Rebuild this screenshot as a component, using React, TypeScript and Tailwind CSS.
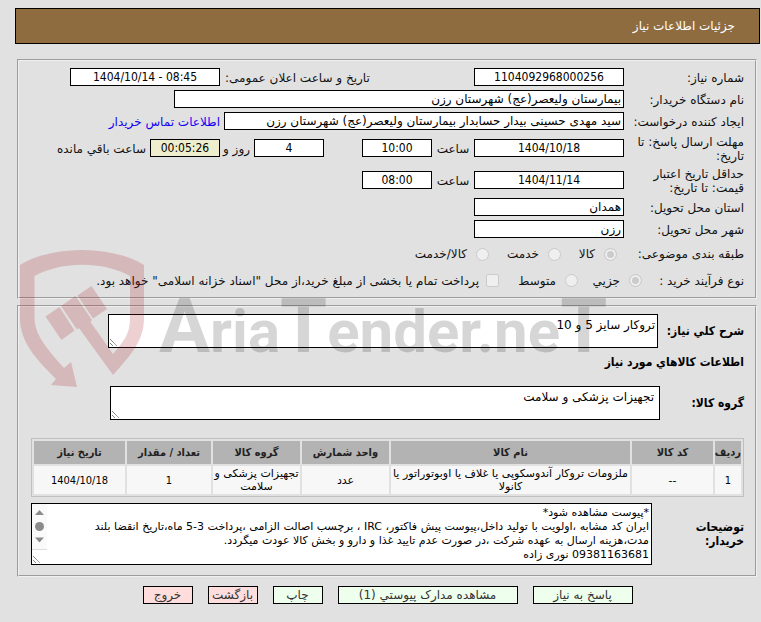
import React from "react";

const BOX =
  "block h-[18px] border border-black bg-white px-[2px] text-[12px] leading-4 text-black outline-none";
const NUMERIC =
  BOX + " text-center font-['DejaVu_Sans_Condensed','DejaVu_Sans',sans-serif]";
const ROW = "flex min-h-[22px] items-center";
const LABEL = "w-[120px] shrink-0 pl-2 pt-px leading-[14px]";
const CHOICE =
  "relative size-[13px] shrink-0 appearance-none border border-[#cbcbcb] bg-[#efefef]";
const RADIO =
  CHOICE +
  " rounded-full checked:bg-[#cbcbcb] checked:shadow-[inset_0_0_0_2px_#efefef]";
const BOLD =
  "font-['DejaVu_Sans_Condensed','DejaVu_Sans',sans-serif] text-[12px] font-bold text-black";

function Grip() {
  return (
    <svg className="block" width="9" height="9" viewBox="0 0 9 9" aria-hidden="true">
      <path d="M1 1L8 8M1 5L4 8" stroke="#555" strokeWidth="1" strokeDasharray="1 0.6" fill="none" />
    </svg>
  );
}

function Area({ id, value, wide }: { id: string; value: string; wide?: boolean }) {
  return (
    <div className="flex h-[34px] w-[550px] border border-black bg-white">
      <textarea
        id={id}
        readOnly
        className={
          "block min-w-0 flex-1 resize-none overflow-hidden bg-transparent py-[3px] text-[12px] leading-[14px] text-black outline-none " +
          (wide ? "px-[5px]" : "px-[2px]")
        }
        defaultValue={value}
      />
      <div className="self-end">
        <Grip />
      </div>
    </div>
  );
}

function Watermark() {
  return (
    <svg
      className="pointer-events-none absolute left-[17px] top-[247px]"
      width="600"
      height="145"
      viewBox="17 247 600 145"
      aria-hidden="true"
    >
      <g fill="#a5141e" fillOpacity="0.2">
        <path d="M20 265C52 245 112 245 144 265V318C144 340 132 354 113 375L79 328L77 329.500L61 306L75.500 296L92 320L90.500 322L113 354C125 340 130 333 130 318V276C103 261 62 261 34.500 276V318C34.500 334 46 348 64 368L71 362L77 387L51 385L56 379C36 359 20 342 20 318Z" />
        <path d="M45.500 316.500L59.500 307L74.500 330.500L61.500 340Z" />
        <path d="M77.500 295.500L91.500 286L107 309L93 318.500Z" />
      </g>
      <text
        x="159"
        y="352"
        fontSize="60"
        fontWeight="700"
        fill="#000"
        fillOpacity="0.16"
        fontFamily="Roboto, 'Liberation Sans', sans-serif"
        direction="ltr"
      >
        <tspan fontSize="76">A</tspan>ria<tspan fontSize="76">T</tspan>ender.ne<tspan fontSize="76">T</tspan>
      </text>
    </svg>
  );
}

const COLUMNS = [
  ["ردیف", "1", "w-[26px]"],
  ["کد کالا", "--", "w-[81px]"],
  ["نام کالا", "ملزومات تروکار آندوسکوپی یا غلاف یا اوبوتوراتور یا کانولا", ""],
  ["واحد شمارش", "عدد", "w-[87px]"],
  ["گروه کالا", "تجهیزات پزشکی و سلامت", "w-[87px]"],
  ["تعداد / مقدار", "1", "w-[84px]"],
  ["تاریخ نیاز", "1404/10/18", "w-[91px]"],
];

const NOTES =
  "*پیوست مشاهده شود*\nایران کد مشابه ،اولویت با تولید داخل،پیوست پیش فاکتور، IRC ، برچسب اصالت الزامی ،پرداخت 3-5 ماه،تاریخ انقضا بلند مدت،هزینه ارسال به عهده شرکت ،در صورت عدم تایید غذا و دارو و بخش کالا عودت میگردد.\n09381163681 نوری زاده";

const PANEL = "min-w-0 border-2 border-[#f0f0f0] [border-style:groove] pl-3 pr-[11px]";
const BUTTON = "h-[18px] border border-black text-[12px] leading-4 text-[#333]";

export default function App() {
  return (
    <div
      dir="rtl"
      className="relative min-h-screen bg-[#e1e1e1] pb-4 pl-[15px] pr-px pt-2 font-['DejaVu_Sans',sans-serif] text-[12px] text-[#111]"
    >
      <header className="flex h-9 items-center border border-black bg-[#8f6c40] px-6 text-white">
        <h1>جزئیات اطلاعات نیاز</h1>
      </header>

      <main className="ml-[2px] mr-[3px] mt-[15px]">
        <fieldset className={PANEL + " pb-1 pt-[5px]"}>
          <div className={ROW}>
            <label htmlFor="number" className={LABEL}>شماره نیاز:</label>
            <input id="number" readOnly defaultValue="1104092968000256" className={NUMERIC + " w-[150px]"} />
            <label htmlFor="announce" className="w-[254px] pl-[5px] pt-px text-left">تاریخ و ساعت اعلان عمومی:</label>
            <input id="announce" dir="ltr" readOnly defaultValue="1404/10/14 - 08:45" className={NUMERIC + " w-[150px]"} />
          </div>
          <div className={ROW}>
            <label htmlFor="org" className={LABEL}>نام دستگاه خریدار:</label>
            <input id="org" readOnly defaultValue="بیمارستان ولیعصر(عج) شهرستان رزن" className={BOX + " w-[450px]"} />
          </div>
          <div className={ROW}>
            <label htmlFor="creator" className={LABEL + " whitespace-nowrap"}>ایجاد کننده درخواست:</label>
            <input id="creator" readOnly defaultValue="سید مهدی حسینی بیدار حسابدار بیمارستان ولیعصر(عج) شهرستان رزن" className={BOX + " w-[400px]"} />
            <a href="#contact" className="pr-1 pt-px text-[#1400f5]">اطلاعات تماس خریدار</a>
          </div>
          <div className={ROW + " h-8"}>
            <label htmlFor="deadline" className={LABEL}>مهلت ارسال پاسخ: تا تاریخ:</label>
            <input id="deadline" readOnly defaultValue="1404/10/18" className={NUMERIC + " w-[150px]"} />
            <label htmlFor="deadline-hour" className="w-[42px] pt-px text-center">ساعت</label>
            <input id="deadline-hour" readOnly defaultValue="10:00" className={NUMERIC + " ml-[38px] w-[70px]"} />
            <input id="days" readOnly defaultValue="4" className={NUMERIC + " w-[70px]"} />
            <label htmlFor="days" className="w-[34px] pr-1 pt-px">روز و</label>
            <input id="remaining" readOnly defaultValue="00:05:26" className={NUMERIC + " w-[70px] !bg-[#eeeecc]"} />
            <label htmlFor="remaining" className="whitespace-nowrap pr-1 pt-px">ساعت باقي مانده</label>
          </div>
          <div className={ROW + " h-8"}>
            <label htmlFor="validity" className={LABEL}>حداقل تاریخ اعتبار قیمت: تا تاریخ:</label>
            <input id="validity" readOnly defaultValue="1404/11/14" className={NUMERIC + " w-[150px]"} />
            <label htmlFor="validity-hour" className="w-[42px] pt-px text-center">ساعت</label>
            <input id="validity-hour" readOnly defaultValue="08:00" className={NUMERIC + " w-[70px]"} />
          </div>
          <div className={ROW}>
            <label htmlFor="province" className={LABEL}>استان محل تحویل:</label>
            <input id="province" readOnly defaultValue="همدان" className={BOX + " w-[150px]"} />
          </div>
          <div className={ROW}>
            <label htmlFor="city" className={LABEL}>شهر محل تحویل:</label>
            <input id="city" readOnly defaultValue="رزن" className={BOX + " w-[150px]"} />
          </div>
          <div role="radiogroup" aria-label="طبقه بندی موضوعی" className="flex h-7 items-center">
            <span className="w-[127px]">طبقه بندی موضوعی:</span>
            <label className="flex w-[56px] items-center gap-[9px]"><input type="radio" name="subject" defaultChecked className={RADIO} />کالا</label>
            <label className="flex w-[72px] items-center gap-[9px]"><input type="radio" name="subject" className={RADIO} />خدمت</label>
            <label className="flex items-center gap-[9px]"><input type="radio" name="subject" className={RADIO} />کالا/خدمت</label>
          </div>
          <div className="flex h-[25px] items-center">
            <span className="w-[102px]">نوع فرآیند خرید :</span>
            <label className="flex w-[64px] items-center gap-[9px]"><input type="radio" name="process" defaultChecked className={RADIO} />جزیي</label>
            <label className="flex w-[79px] items-center gap-[9px]"><input type="radio" name="process" className={RADIO} />متوسط</label>
            <label className="flex items-center gap-[7px] whitespace-nowrap"><input type="checkbox" className={CHOICE + " rounded-[2px]"} />پرداخت تمام یا بخشی از مبلغ خرید،از محل "اسناد خزانه اسلامی" خواهد بود.</label>
          </div>
        </fieldset>

        <fieldset className={PANEL + " mt-[6px] pb-[10px] pt-[7px]"}>
          <div className="flex items-center">
            <label htmlFor="summary" className={BOLD + " w-[86px] shrink-0 whitespace-nowrap"}>شرح کلي نیاز:</label>
            <Area id="summary" value="تروکار سایز 5 و 10" />
          </div>
          <h2 className={BOLD + " py-[5px] leading-[18px]"}>اطلاعات کالاهاي مورد نیاز</h2>
          <div className="mt-[10px] flex items-center">
            <label htmlFor="group" className={BOLD + " w-[84px] shrink-0"}>گروه کالا:</label>
            <Area id="group" value="تجهیزات پزشکی و سلامت" wide />
          </div>

          <table className="mt-[18px] w-full table-fixed border-separate border-spacing-[2px] border border-[#c0c0c0] text-center text-[11px] leading-[13px] text-black">
            <thead>
              <tr className="h-[23px]">
                {COLUMNS.map(([name, , width]) => (
                  <th key={name} scope="col" className={"whitespace-nowrap bg-[#b3b3b3] p-0 font-['DejaVu_Sans_Condensed','DejaVu_Sans',sans-serif] font-bold text-[#222] " + width}>{name}</th>
                ))}
              </tr>
            </thead>
            <tbody>
              <tr className="h-7">
                {COLUMNS.map(([name, value]) => (
                  <td key={name} className={"bg-[#f7f7f7] p-0" + (/^[\d/]+$/.test(value) ? " font-['DejaVu_Sans_Condensed','DejaVu_Sans',sans-serif]" : "")}>{value}</td>
                ))}
              </tr>
            </tbody>
          </table>

          <div className="mt-[6px] flex items-center">
            <label htmlFor="notes" className={BOLD + " w-[92px] shrink-0 pl-4 leading-[14px]"}>توضیحات خریدار:</label>
            <div className="flex h-[62px] min-w-0 flex-1 border border-black bg-white">
              <textarea id="notes" readOnly defaultValue={NOTES} className="block min-w-0 flex-1 resize-none overflow-hidden bg-transparent p-[2px] text-[11px] leading-[14px] text-black outline-none" />
              <div className="flex w-[15px] flex-col justify-between bg-[#fafafa]">
                <svg className="block" width="15" height="45" viewBox="0 0 15 45" fill="#8b8b8b" aria-hidden="true">
                  <path d="M3 11L7.500 6L12 11Z" />
                  <circle cx="7.500" cy="22.500" r="4.500" />
                  <path d="M3 33.500L7.500 38.500L12 33.500Z" />
                </svg>
                <div className="flex h-[15px] items-end justify-end border-t border-[#dcdcdc] bg-white">
                  <Grip />
                </div>
              </div>
            </div>
          </div>
        </fieldset>
      </main>

      <div className="mt-[9px] flex justify-center gap-[15px]">
        <button type="button" className={BUTTON + " w-[100px] bg-[#eeffee]"}>پاسخ به نیاز</button>
        <button type="button" className={BUTTON + " w-[180px] bg-[#eeffee]"}>مشاهده مدارک پیوستي (1)</button>
        <button type="button" className={BUTTON + " w-[50px] bg-[#eeffee]"}>چاپ</button>
        <button type="button" className={BUTTON + " w-[50px] whitespace-nowrap bg-[#ffdddd]"}>بازگشت</button>
        <button type="button" className={BUTTON + " w-[50px] bg-[#ffdddd]"}>خروج</button>
      </div>

      <Watermark />
    </div>
  );
}
